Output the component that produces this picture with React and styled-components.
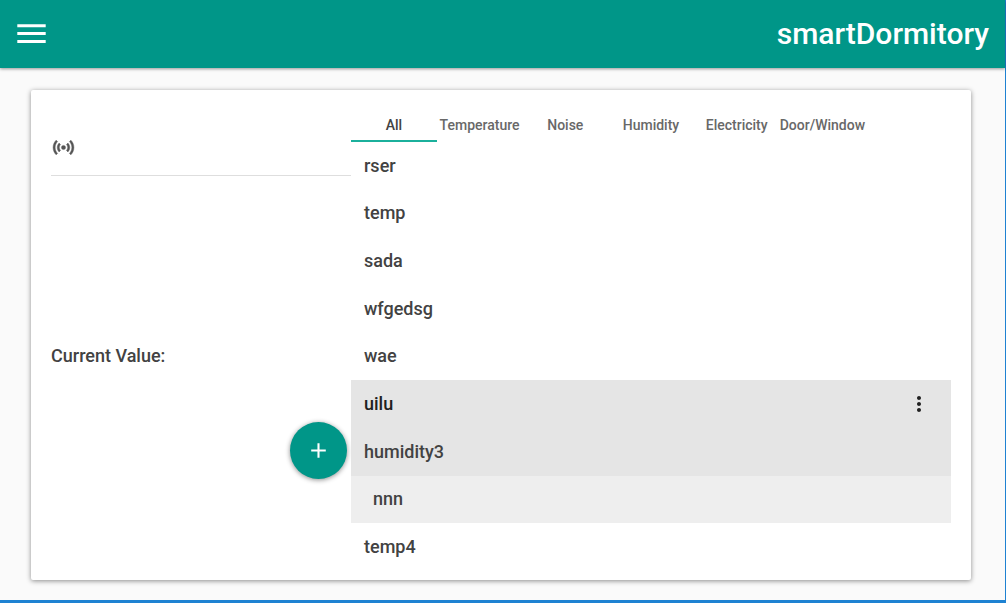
import React, { useState } from 'react';
import styled, { createGlobalStyle, css } from 'styled-components';

const GlobalStyle = createGlobalStyle`
  * { box-sizing: border-box; }
  body {
    margin: 0;
    background: #fafafa;
    font-family: Roboto, "Liberation Sans", sans-serif;
    font-weight: 500;
    color: #424242;
  }
  button { font: inherit; border: 0; padding: 0; cursor: pointer; }
`;

const Page = styled.div`
  min-height: 100vh;
  display: flex;
  flex-direction: column;
  border-right: 1px solid #1e82d2;
  border-bottom: 3px solid #1e82d2;
`;

const Toolbar = styled.header`
  height: 68px;
  padding: 0 16px;
  display: flex;
  align-items: center;
  justify-content: space-between;
  background: #009688;
  color: #fff;
  box-shadow: 0 1px 3px rgba(0, 0, 0, 0.4);
`;

const Brand = styled.h1`
  margin: 0;
  font-size: 30px;
  line-height: 36px;
  font-weight: 500;
`;

const IconButton = styled.button`
  display: flex;
  align-items: center;
  justify-content: center;
  background: none;
  color: inherit;
`;

const Main = styled.main`
  flex: 1;
  padding: 22px 34px 20px 31px;
`;

const Card = styled.section`
  display: grid;
  grid-template-columns: 1fr 2fr;
  padding: 20px 20px 9px;
  background: #fff;
  border-radius: 2px;
  box-shadow: 0 1px 5px rgba(0, 0, 0, 0.45);
`;

const Details = styled.div`
  display: flex;
  flex-direction: column;
`;

const DetailsHeader = styled.div`
  height: 66px;
  padding-top: 10px;
  display: flex;
  align-items: center;
  border-bottom: 1px solid #dedede;
`;

const CurrentValue = styled.p`
  margin: 168px 0 54px;
  font-size: 18px;
  line-height: 24px;
`;

const AddButton = styled.button`
  align-self: flex-end;
  width: 57px;
  height: 57px;
  margin-right: 4px;
  display: flex;
  align-items: center;
  justify-content: center;
  border-radius: 50%;
  background: #009688;
  color: #fff;
  box-shadow: 0 1px 5px rgba(0, 0, 0, 0.45);
`;

const Sensors = styled.div`
  display: flex;
  flex-direction: column;
`;

const Tabs = styled.div`
  display: grid;
  grid-template-columns: repeat(7, 1fr);
  height: 32px;
`;

const Tab = styled.button`
  background: none;
  font-size: 14px;
  line-height: 16px;
  white-space: nowrap;
  color: ${({ $active }) => ($active ? '#424242' : '#686868')};
  border-bottom: 2px solid ${({ $active }) => ($active ? '#1bb09c' : 'transparent')};
`;

const List = styled.ul`
  flex: 1;
  min-height: 429px;
  margin: 0;
  padding: 0;
  list-style: none;
  display: grid;
  grid-auto-rows: 1fr;
`;

const tones = {
  selected: css`background: #e5e5e5; color: #212121;`,
  hover: css`background: #e5e5e5;`,
  light: css`background: #eee;`,
};

const Row = styled.li`
  display: flex;
  align-items: center;
  justify-content: space-between;
  padding: 0 20px 0 ${({ $indent }) => ($indent ? 22 : 13)}px;
  font-size: 18px;
  line-height: 24px;
  ${({ $tone }) => tones[$tone]}
`;

const MenuIcon = () => (
  <svg width="30" height="22" viewBox="0 0 30 22" fill="currentColor" aria-hidden="true">
    <path d="M1.300 1.200h28.400v3H1.300zM1.300 9h28.400v3H1.300zM1.300 16.900h28.400v3H1.300z" />
  </svg>
);

const AccessPointIcon = () => (
  <svg width="25" height="25" viewBox="0 0 24 24" fill="#555" stroke="#555" strokeWidth="0.4" aria-hidden="true">
    <path d="M4.93,4.93C3.12,6.74 2,9.24 2,12C2,14.76 3.12,17.26 4.93,19.07L6.34,17.66C4.89,16.22 4,14.22 4,12C4,9.79 4.89,7.78 6.34,6.34L4.93,4.93M19.07,4.93L17.66,6.34C19.11,7.79 20,9.79 20,12C20,14.22 19.11,16.22 17.66,17.66L19.07,19.07C20.88,17.26 22,14.76 22,12C22,9.24 20.88,6.74 19.07,4.93M7.76,7.76C6.67,8.85 6,10.35 6,12C6,13.65 6.67,15.15 7.76,16.24L9.17,14.83C8.45,14.11 8,13.11 8,12C8,10.89 8.45,9.89 9.17,9.17L7.76,7.76M16.24,7.76L14.83,9.17C15.55,9.89 16,10.89 16,12C16,13.11 15.55,14.11 14.83,14.83L16.24,16.24C17.33,15.15 18,13.65 18,12C18,10.35 17.33,8.85 16.24,7.76M12,10A2,2 0 0,0 10,12A2,2 0 0,0 12,14A2,2 0 0,0 14,12A2,2 0 0,0 12,10Z" />
  </svg>
);

const PlusIcon = () => (
  <svg width="25" height="25" viewBox="0 0 24 24" fill="currentColor" aria-hidden="true">
    <path d="M19 13h-6v6h-2v-6H5v-2h6V5h2v6h6v2z" />
  </svg>
);

const MoreIcon = () => (
  <svg width="24" height="24" viewBox="0 0 24 24" fill="currentColor" aria-hidden="true">
    <path d="M12 8c1.100 0 2-.9 2-2s-.9-2-2-2-2 .9-2 2 .9 2 2 2zm0 2c-1.100 0-2 .9-2 2s.9 2 2 2 2-.9 2-2-.9-2-2-2zm0 6c-1.100 0-2 .9-2 2s.9 2 2 2 2-.9 2-2-.9-2-2-2z" />
  </svg>
);

const categories = ['All', 'Temperature', 'Noise', 'Humidity', 'Electricity', 'Door/Window'];

const sensors = [
  { name: 'rser' },
  { name: 'temp' },
  { name: 'sada' },
  { name: 'wfgedsg' },
  { name: 'wae' },
  { name: 'uilu', tone: 'selected', menu: true },
  { name: 'humidity3', tone: 'hover' },
  { name: 'nnn', tone: 'light', indent: true },
  { name: 'temp4' },
];

export default function App() {
  const [active, setActive] = useState('All');
  return (
    <>
      <GlobalStyle />
      <Page>
        <Toolbar>
          <IconButton aria-label="Menu"><MenuIcon /></IconButton>
          <Brand>smartDormitory</Brand>
        </Toolbar>
        <Main>
          <Card>
            <Details>
              <DetailsHeader><AccessPointIcon /></DetailsHeader>
              <CurrentValue>Current Value:</CurrentValue>
              <AddButton aria-label="Add sensor"><PlusIcon /></AddButton>
            </Details>
            <Sensors>
              <Tabs role="tablist">
                {categories.map((name) => (
                  <Tab
                    key={name}
                    role="tab"
                    aria-selected={name === active}
                    $active={name === active}
                    onClick={() => setActive(name)}
                  >
                    {name}
                  </Tab>
                ))}
              </Tabs>
              <List>
                {sensors.map(({ name, tone, indent, menu }) => (
                  <Row key={name} $tone={tone} $indent={indent}>
                    {name}
                    {menu && <IconButton aria-label="More options"><MoreIcon /></IconButton>}
                  </Row>
                ))}
              </List>
            </Sensors>
          </Card>
        </Main>
      </Page>
    </>
  );
}
